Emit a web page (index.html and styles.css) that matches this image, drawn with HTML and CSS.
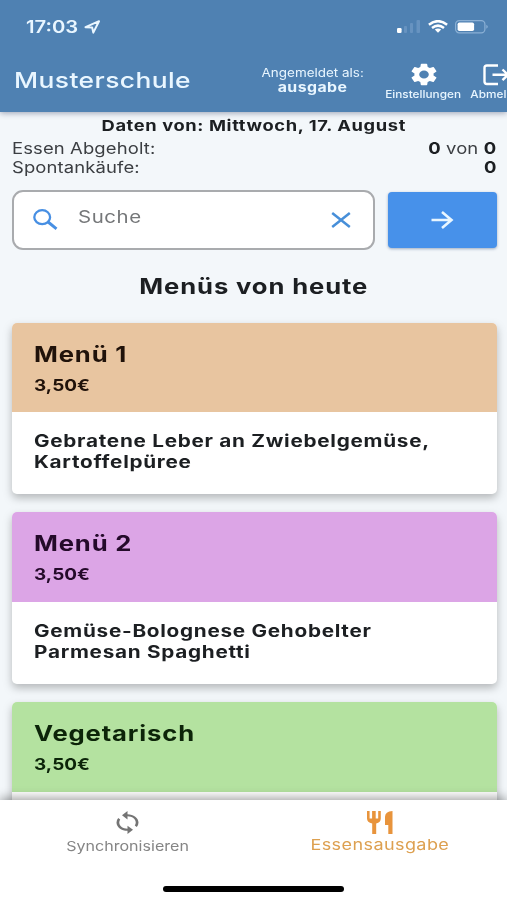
FILE: index.html
```html
<!DOCTYPE html>
<html lang="de">
<head>
<meta charset="utf-8">
<title>Musterschule</title>
<link rel="stylesheet" href="styles.css">
</head>
<body>
<div class="app">
  <header class="top">
    <div class="status">
      <span class="wide clock">17:03</span>
      <svg class="locate" width="17" height="14" viewBox="0 0 17 14"><path d="M1.500 7.200 15 1.200 9.300 12.600 8.200 7.600z" fill="none" stroke="#e9f6ff" stroke-width="2" stroke-linejoin="round"/></svg>
      <svg class="signal" width="24" height="13" viewBox="0 0 24 13"><rect x="0" y="8" width="4.600" height="5" rx="1.200" fill="#fff"/><g fill="#6793c0"><rect x="7" y="6" width="3" height="7" rx="1"/><rect x="13" y="3" width="3" height="10" rx="1"/><rect x="19.500" y="0" width="3.500" height="13" rx="1"/></g></svg>
      <svg class="wifi" width="20" height="13" viewBox="0 0 20 13"><g fill="none" stroke="#fff" stroke-width="2.500"><path d="M.9 4.700Q10-2.400 19.100 4.700"/><path d="M4 8Q10 3.300 16 8"/></g><path d="M6.800 9.600Q10 7.400 13.200 9.600L10 12.800z" fill="#fff"/></svg>
      <svg class="battery" width="34" height="14" viewBox="0 0 34 14"><rect x=".6" y=".6" width="29.300" height="12.200" rx="3.600" fill="none" stroke="#8bb0d5" stroke-width="1.200"/><rect x="2.600" y="2.400" width="16.500" height="8.700" rx="1.800" fill="#fff"/><path d="M31.300 4.700q3 2 0 4z" fill="#8bb0d5"/></svg>
    </div>
    <div class="bar">
      <h1 class="title"><span class="wide">Musterschule</span></h1>
      <div class="user"><span class="wide mid user-label">Angemeldet als:</span><strong class="wide mid user-name">ausgabe</strong></div>
      <div class="action settings">
        <svg width="32" height="27" viewBox="0 0 24 24" preserveAspectRatio="none"><path fill="#fff" d="M19.140 12.940c.04-.3.06-.61.06-.94s-.02-.64-.07-.94l2.030-1.580a.49.49 0 0 0 .12-.61l-1.920-3.320a.49.49 0 0 0-.59-.22l-2.390.96c-.5-.38-1.030-.7-1.620-.94l-.36-2.540a.48.48 0 0 0-.48-.41h-3.840a.47.47 0 0 0-.47.41l-.36 2.540c-.59.24-1.130.57-1.620.94l-2.390-.96a.48.48 0 0 0-.59.22L2.740 8.870a.47.47 0 0 0 .12.61l2.030 1.580c-.05.3-.09.63-.09.94s.02.64.07.94l-2.030 1.580a.49.49 0 0 0-.12.61l1.920 3.320c.12.22.37.29.59.22l2.390-.96c.5.38 1.030.7 1.620.94l.36 2.540c.05.24.24.41.48.41h3.840c.24 0 .44-.17.47-.41l.36-2.540c.59-.24 1.130-.56 1.620-.94l2.390.96c.22.08.47 0 .59-.22l1.920-3.320a.47.47 0 0 0-.12-.61zM12 15.600A3.600 3.600 0 1 1 12 8.400a3.600 3.600 0 0 1 0 7.200z"/></svg>
        <span class="wide mid action-label">Einstellungen</span>
      </div>
      <div class="action logout">
        <svg width="32" height="22" viewBox="0 0 32 22"><path d="M15 1.500H4Q1.500 1.500 1.500 4v13.500Q1.500 20 4 20h11M9.500 10.800H27M19.500 5.500l5.500 5.300-5.500 5.300" fill="none" stroke="#fff" stroke-width="2.400"/></svg>
        <span class="wide mid action-label">Abmelden</span>
      </div>
    </div>
  </header>
  <main class="content">
    <div class="date"><strong class="wide mid">Daten von: Mittwoch, 17. August</strong></div>
    <div class="row"><span class="wide">Essen Abgeholt:</span><span class="wide end"><b>0</b> von <b>0</b></span></div>
    <div class="row"><span class="wide">Spontankäufe:</span><span class="wide end"><b>0</b></span></div>
    <div class="search">
      <div class="field">
        <svg width="25" height="21" viewBox="0 0 25 21" fill="none" stroke="#478fe3"><ellipse cx="9.200" cy="8.200" rx="7.900" ry="7" stroke-width="2.300"/><path d="M14.500 12.500 23.500 19.800" stroke-width="2.900"/></svg>
        <span class="wide hint">Suche</span>
        <svg class="clear" width="20" height="16" viewBox="0 0 20 16"><path d="M1.200 1 18.800 15M18.800 1 1.200 15" stroke="#478fd9" stroke-width="2.500"/></svg>
      </div>
      <div class="go"><svg width="23" height="18" viewBox="0 0 23 18"><path d="M.5 9H21M11 1l9.500 8-9.500 8" fill="none" stroke="#e9f6ff" stroke-width="2.600"/></svg></div>
    </div>
    <h2 class="heading"><span class="wide mid">Menüs von heute</span></h2>
    <div class="menus">
      <section class="card">
        <div class="card-head orange"><h3 class="name"><span class="wide">Menü 1</span></h3><p class="price"><span class="wide">3,50€</span></p></div>
        <p class="dish"><span class="wide">Gebratene Leber an Zwiebelgemüse,<br>Kartoffelpüree</span></p>
      </section>
      <section class="card">
        <div class="card-head violet"><h3 class="name"><span class="wide">Menü 2</span></h3><p class="price"><span class="wide">3,50€</span></p></div>
        <p class="dish"><span class="wide">Gemüse-Bolognese Gehobelter<br>Parmesan Spaghetti</span></p>
      </section>
      <section class="card">
        <div class="card-head green"><h3 class="name"><span class="wide">Vegetarisch</span></h3><p class="price"><span class="wide">3,50€</span></p></div>
      </section>
    </div>
  </main>
  <nav class="tabs">
    <div class="tab">
      <svg width="33" height="25" viewBox="0 0 24 24" preserveAspectRatio="none"><path fill="#747474" d="M12 4V1L8 5l4 4V6c3.310 0 6 2.690 6 6 0 1.010-.250 1.970-.7 2.800l1.460 1.460A7.930 7.930 0 0 0 20 12c0-4.420-3.580-8-8-8zm0 14c-3.310 0-6-2.690-6-6 0-1.010.250-1.970.7-2.800L5.240 7.740A7.930 7.930 0 0 0 4 12c0 4.420 3.580 8 8 8v3l4-4-4-4v3z"/></svg>
      <span class="wide mid tab-label">Synchronisieren</span>
    </div>
    <div class="tab active">
      <svg width="26" height="23" viewBox="0 0 26 23"><path fill="#e8943c" d="M0 0h2.600v7.500h2.500V0H8.700v7.500h2.500V0H13.800v7.500q0 4-4.600 5V23H5.200V12.500Q0 11.500 0 7.500zM25.500 0v23h-4.200v-9H18V6q0-5.500 7.500-6z"/></svg>
      <span class="wide mid tab-label">Essensausgabe</span>
    </div>
    <div class="home"></div>
  </nav>
</div>
</body>
</html>
```
FILE: styles.css
```css
* { box-sizing: border-box; margin: 0; padding: 0; }
body { width: 507px; height: 900px; overflow: hidden; font-family: Inter, "Liberation Sans", sans-serif; color: #1c1f22; background: #f3f7fa; }
svg { display: block; flex: none; }
.app { height: 900px; display: flex; flex-direction: column; overflow: hidden; }

/* Extended letterforms: every label is widened around its anchor side */
.wide { display: inline-block; white-space: nowrap; transform: scaleX(var(--stretch, 1.19)); transform-origin: left center; }
.mid { transform-origin: center; }
.end { transform-origin: right center; }

.top { flex: none; height: 111.5px; background: #4f81b2; color: #e9f6ff; position: relative; z-index: 2; box-shadow: 0 1px 6px rgba(40, 50, 90, .45); }
.status { height: 52px; padding: 1px 18px 0 26px; display: flex; align-items: center; }
.clock { width: 58px; font-size: 17px; font-weight: 600; line-height: 20px; }
.signal { margin-left: auto; margin-right: 7px; }
.wifi { margin-right: 7px; }
.bar { height: 60px; padding-left: 14px; display: flex; align-items: flex-start; }
.title { --stretch: 1.2; flex: none; width: 247px; font-size: 22px; font-weight: 500; line-height: 57px; letter-spacing: .35px; }
.user { flex: none; width: 103px; padding-top: 14px; display: flex; flex-direction: column; align-items: center; }
.user-label { --stretch: 1.17; font-size: 11.5px; line-height: 14px; }
.user-name { --stretch: 1.22; font-size: 13px; line-height: 14px; letter-spacing: .35px; }
.action { flex: none; display: flex; flex-direction: column; align-items: center; }
.action svg { margin-top: 9px; margin-bottom: 1px; }
.settings { width: 75px; margin-left: 22px; }
.logout { width: 60px; margin-left: 8px; }
.logout svg { margin-top: 12px; margin-bottom: 3px; }
.action-label { --stretch: 1.145; font-size: 10.3px; font-weight: 500; line-height: 11px; }

.content { flex: 1; min-height: 0; padding: 0 10.5px 0 11.5px; overflow: hidden; }
.date { --stretch: 1.22; height: 27px; line-height: 27px; text-align: center; font-size: 15px; letter-spacing: .5px; }
.date strong { font-weight: 700; }
.row { display: flex; justify-content: space-between; height: 19px; line-height: 19px; font-size: 15.5px; letter-spacing: .1px; color: #3b3e42; }
.row b { font-weight: 700; color: #1c1f22; }
.search { height: 60px; margin-top: 13px; display: flex; align-items: center; justify-content: space-between; }
.field { width: 363px; height: 60px; padding: 0 22px 0 19px; display: flex; align-items: center; border: 2.5px solid #a9abae; border-radius: 11px; background: #fff; }
.hint { --stretch: 1.2; margin: -5px 0 0 20px; font-size: 17px; letter-spacing: .5px; color: #757779; }
.clear { margin-left: auto; }
.go { width: 109px; height: 56px; display: flex; align-items: center; justify-content: center; border-radius: 4px; background: #4791ea; box-shadow: 0 1px 3px rgba(30, 60, 110, .4); }
.heading { --stretch: 1.22; height: 73px; line-height: 73px; text-align: center; font-size: 21px; font-weight: 700; letter-spacing: .72px; }
.menus { display: flex; flex-direction: column; gap: 17.7px; filter: drop-shadow(0 4px 4px rgba(0, 0, 0, .26)); }
.card { flex: none; height: 171.9px; overflow: hidden; border-radius: 5px; background: #fff; }
.card-head { height: 89.9px; padding: 17px 0 0 22px; }
.orange { background: #e8c5a0; color: #20120a; }
.violet { background: #dca5e6; color: #240a2a; }
.green { background: #b4e2a0; color: #0c2409; }
.name { --stretch: 1.22; font-size: 21px; font-weight: 700; line-height: 30px; letter-spacing: .7px; }
.price { --stretch: 1.22; margin-top: 4px; font-size: 15.5px; font-weight: 700; line-height: 24px; letter-spacing: .05px; }
.dish { --stretch: 1.22; padding: 19px 0 0 22px; font-size: 17px; font-weight: 700; line-height: 21px; letter-spacing: .58px; }

.tabs { flex: none; height: 100px; display: grid; grid-template-columns: 1fr 1fr; grid-template-rows: 86px 14px; background: #fff; position: relative; z-index: 2; box-shadow: 0 -2px 10px rgba(0, 0, 0, .38); }
.tab { display: flex; flex-direction: column; align-items: center; padding: 10px 0 0 1px; color: #858585; }
.tab-label { margin-top: 2px; font-size: 13.5px; line-height: 18px; }
.active { padding: 11px 0 0; color: #dda050; }
.active .tab-label { --stretch: 1.2; font-size: 15px; letter-spacing: .35px; }
.home { grid-column: 1 / 3; justify-self: center; width: 181px; height: 6px; border-radius: 3px; background: #000; }
```
